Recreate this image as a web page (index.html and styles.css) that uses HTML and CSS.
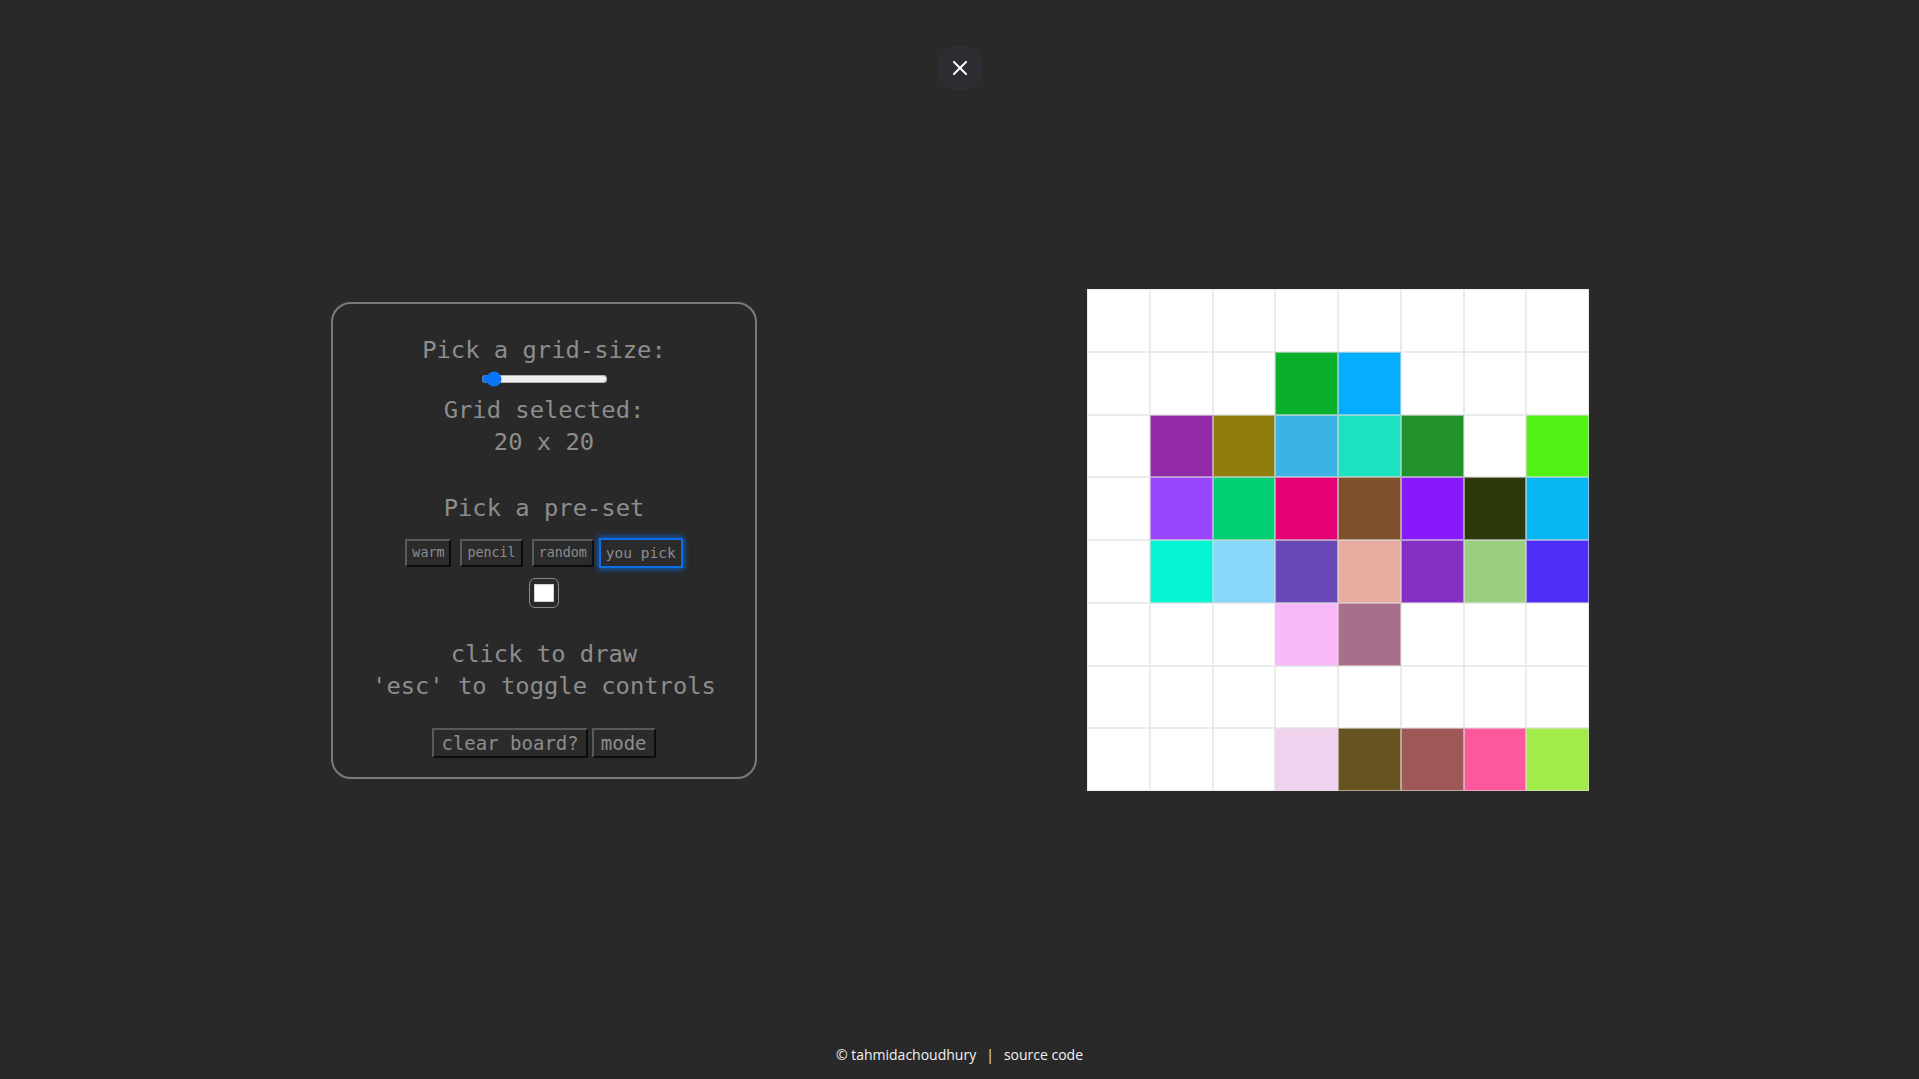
FILE: index.html
```html
<!DOCTYPE html>
<html lang="en">
<head>
<meta charset="utf-8">
<title>Etch-a-sketch</title>
<link rel="stylesheet" href="styles.css">
</head>
<body>
<header class="top">
  <button class="close" aria-label="close">
    <svg width="14" height="14" viewBox="0 0 14 14"><path d="M1 1L13 13M13 1L1 13" stroke="#fff" stroke-width="2" stroke-linecap="square"/></svg>
  </button>
</header>
<main class="stage">
  <section class="panel">
    <p class="line first">Pick a grid-size:</p>
    <input class="slider" type="range" min="16" max="100" value="20">
    <p class="line sel">Grid selected:</p>
    <p class="line">20 x 20</p>
    <p class="line preset">Pick a pre-set</p>
    <div class="presets">
      <button class="btn">warm</button>
      <button class="btn">pencil</button>
      <button class="btn">random</button>
      <button class="btn active">you pick</button>
    </div>
    <div class="swatch"><span class="swatch-fill"></span></div>
    <p class="line hint">click to draw</p>
    <p class="line">'esc' to toggle controls</p>
    <div class="actions">
      <button class="btn big">clear board?</button>
      <button class="btn big">mode</button>
    </div>
  </section>
  <section class="board">
    <div class="cell"></div><div class="cell"></div><div class="cell"></div><div class="cell"></div><div class="cell"></div><div class="cell"></div><div class="cell"></div><div class="cell"></div>
    <div class="cell"></div><div class="cell"></div><div class="cell"></div><div class="cell c-green"></div><div class="cell c-blue"></div><div class="cell"></div><div class="cell"></div><div class="cell"></div>
    <div class="cell"></div><div class="cell c-purple"></div><div class="cell c-olive"></div><div class="cell c-lightblue"></div><div class="cell c-teal"></div><div class="cell c-forest"></div><div class="cell"></div><div class="cell c-lime"></div>
    <div class="cell"></div><div class="cell c-violet"></div><div class="cell c-emerald"></div><div class="cell c-magenta"></div><div class="cell c-brown"></div><div class="cell c-electric"></div><div class="cell c-darkolive"></div><div class="cell c-sky"></div>
    <div class="cell"></div><div class="cell c-aqua"></div><div class="cell c-pale"></div><div class="cell c-indigo"></div><div class="cell c-salmon"></div><div class="cell c-orchid"></div><div class="cell c-sage"></div><div class="cell c-blueviolet"></div>
    <div class="cell"></div><div class="cell"></div><div class="cell"></div><div class="cell c-pink"></div><div class="cell c-mauve"></div><div class="cell"></div><div class="cell"></div><div class="cell"></div>
    <div class="cell"></div><div class="cell"></div><div class="cell"></div><div class="cell"></div><div class="cell"></div><div class="cell"></div><div class="cell"></div><div class="cell"></div>
    <div class="cell"></div><div class="cell"></div><div class="cell"></div><div class="cell c-lavender"></div><div class="cell c-mud"></div><div class="cell c-rust"></div><div class="cell c-hotpink"></div><div class="cell c-chartreuse"></div>
  </section>
</main>
<footer class="foot">
  <a class="foot-link" href="#">© tahmidachoudhury</a>
  <span class="sep">|</span>
  <a class="foot-link" href="#">source code</a>
</footer>
</body>
</html>
```
FILE: styles.css
```css
* { box-sizing: border-box; }
html, body { margin: 0; padding: 0; }
body {
  background: #292929;
  height: 1079px;
  display: flex;
  flex-direction: column;
  font-family: "DejaVu Sans Mono", monospace;
  overflow: hidden;
}
.top {
  height: 92px;
  padding-top: 45px;
  display: flex;
  justify-content: center;
}
.close {
  width: 46px;
  height: 46px;
  border-radius: 50%;
  border: none;
  background: #2c2e33;
  display: flex;
  align-items: center;
  justify-content: center;
  padding: 0;
}
.stage {
  flex: 1;
  display: flex;
  justify-content: space-evenly;
  align-items: center;
  padding-left: 1px;
}
.panel {
  width: 426px;
  height: 477px;
  border: 2px solid #7b7b7b;
  border-radius: 20px;
  padding-top: 30px;
  display: flex;
  flex-direction: column;
  align-items: center;
  color: #8d8d8d;
}
.line {
  margin: 0;
  font-size: 23.8px;
  line-height: 32px;
  white-space: pre;
}
.slider {
  width: 127px;
  height: 14px;
  margin: 6px 0 0 0;
  accent-color: #0b75f7;
}
.sel { margin-top: 8px; }
.preset { margin-top: 34px; }
.presets {
  margin-top: 14px;
  display: flex;
  align-items: center;
  gap: 9px;
}
.btn {
  font-family: "DejaVu Sans Mono", monospace;
  font-size: 13.33px;
  color: #8d8d8d;
  background: #2b2b2b;
  border: 2px solid;
  border-color: #5a5a5a #0c0c0c #0c0c0c #5a5a5a;
  padding: 0 5px;
  height: 28px;
  line-height: 24px;
}
.btn.active {
  font-size: 14.5px;
  height: 30px;
  margin-left: -4px;
  border-color: #0a6ee6;
  box-shadow: 0 0 6px 1px rgba(10, 120, 255, 0.75);
}
.swatch {
  margin-top: 10px;
  width: 30px;
  height: 30px;
  border: 1px solid #8a8a8a;
  border-radius: 6px;
  padding: 5px 4px;
}
.swatch-fill {
  display: block;
  width: 20px;
  height: 18px;
  background: #fff;
  border: 1px solid #d0d0d0;
}
.hint { margin-top: 30px; }
.actions {
  margin-top: 26px;
  display: flex;
  gap: 4px;
}
.btn.big {
  font-size: 19px;
  height: 30px;
  line-height: 26px;
  padding: 0 7px;
}
.board {
  width: 502px;
  height: 502px;
  display: grid;
  grid-template-columns: repeat(8, 1fr);
  grid-template-rows: repeat(8, 1fr);
  background: #fff;
}
.cell {
  background: #fff;
  border: 1px solid rgba(222, 222, 222, 0.6);
}
.c-green { background: #0aaf2a; }
.c-blue { background: #04adfd; }
.c-purple { background: #922aa8; }
.c-olive { background: #8e7d0b; }
.c-lightblue { background: #3db3e5; }
.c-teal { background: #1de2bf; }
.c-forest { background: #21922b; }
.c-lime { background: #52f216; }
.c-violet { background: #9945fe; }
.c-emerald { background: #00d071; }
.c-magenta { background: #e30174; }
.c-brown { background: #804f2c; }
.c-electric { background: #8719fc; }
.c-darkolive { background: #2c390b; }
.c-sky { background: #07b5f2; }
.c-aqua { background: #04f4d4; }
.c-pale { background: #88d8fc; }
.c-indigo { background: #6849b7; }
.c-salmon { background: #e8aba0; }
.c-orchid { background: #832fc3; }
.c-sage { background: #99cf7f; }
.c-blueviolet { background: #4e2ff8; }
.c-pink { background: #f8b8fa; }
.c-mauve { background: #a86e8b; }
.c-lavender { background: #f0d2ee; }
.c-mud { background: #67531f; }
.c-rust { background: #9e5957; }
.c-hotpink { background: #fe589d; }
.c-chartreuse { background: #a2ec4a; }
.foot {
  height: 91px;
  display: flex;
  justify-content: center;
  align-items: flex-end;
  padding-bottom: 15px;
  gap: 10px;
  font-family: "Open Sans", sans-serif;
  font-size: 14px;
  line-height: 18px;
  color: #f2f2f2;
}
.foot-link {
  color: #f2f2f2;
  text-decoration: none;
}
.sep { color: #e8e8f4; }
```
